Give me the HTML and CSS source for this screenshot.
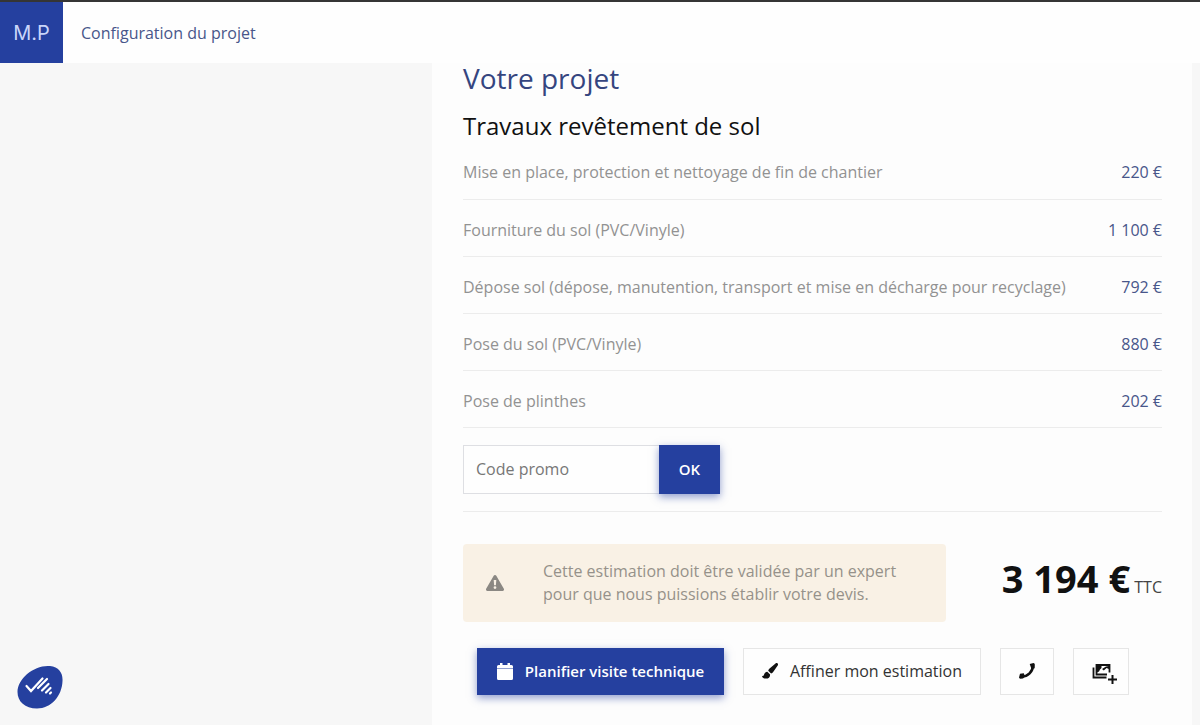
FILE: index.html
```html
<!DOCTYPE html>
<html lang="fr">
<head>
    <meta charset="UTF-8">
    <meta name="viewport" content="width=device-width, initial-scale=1.0">
    <title>Configuration du projet</title>
    <link rel="stylesheet" href="styles.css">
</head>
<body>

<header class="topbar">
    <a class="logo" href="#">M.P</a>
    <span class="topbar-title">Configuration du projet</span>
</header>

<main class="quote">
    <h1>Votre projet</h1>
    <h2>Travaux revêtement de sol</h2>

    <table class="lines">
        <tbody>
            <tr><td>Mise en place, protection et nettoyage de fin de chantier</td><td class="price">220 €</td></tr>
            <tr><td>Fourniture du sol (PVC/Vinyle)</td><td class="price">1 100 €</td></tr>
            <tr><td>Dépose sol (dépose, manutention, transport et mise en décharge pour recyclage)</td><td class="price">792 €</td></tr>
            <tr><td>Pose du sol (PVC/Vinyle)</td><td class="price">880 €</td></tr>
            <tr><td>Pose de plinthes</td><td class="price">202 €</td></tr>
        </tbody>
    </table>

    <form class="promo">
        <input type="text" placeholder="Code promo" aria-label="Code promo">
        <button type="button" class="btn-primary">OK</button>
    </form>

    <div class="summary">
        <div class="notice">
            <div class="notice-icon">
                <svg width="18" height="16" viewBox="0 0 18 16" aria-hidden="true">
                    <path fill="#8b8883" fill-rule="evenodd" d="M7.7.8a1.5 1.5 0 0 1 2.6 0l7.4 12.8A1.5 1.5 0 0 1 16.4 16H1.6A1.5 1.5 0 0 1 .3 13.6zM7.7 5l.4 5.3h1.8l.4-5.3zM9 11.2a1.4 1.4 0 1 0 0 2.8 1.4 1.4 0 0 0 0-2.8z"/>
                </svg>
            </div>
            <p>Cette estimation doit être validée par un expert pour que nous puissions établir votre devis.</p>
        </div>
        <div class="total"><strong>3 194 €</strong> <span>TTC</span></div>
    </div>

    <div class="actions">
        <button type="button" class="btn-primary btn-plan">
            <svg width="16" height="17" viewBox="0 0 16 17" aria-hidden="true">
                <path fill="#fff" d="M3 0h2.5v2h5V0H13v2h1.5A1.5 1.5 0 0 1 16 3.5V5H0V3.5A1.5 1.5 0 0 1 1.5 2H3zM0 5.6h16v9.9a1.5 1.5 0 0 1-1.5 1.5h-13A1.5 1.5 0 0 1 0 15.5z"/>
            </svg>
            Planifier visite technique
        </button>
        <button type="button" class="btn-outline btn-refine">
            <svg width="16" height="16" viewBox="0 0 16 16" aria-hidden="true">
                <path fill="#111" d="M15.6.4c.6.6.5 1.4.1 2.1L11 9.2c-.5.7-1.1 1.1-1.9 1.3L6.2 7.7c.1-.7.5-1.3 1.1-1.9L13.5.5c.6-.5 1.5-.6 2.1-.1zM5.3 8.7l2.8 2.7c.1 2.8-1.5 4.2-4.1 4.2-2.3 0-3.7-.8-4-2.9.9.5 1.5.4 1.9-.7.5-1.9 1.6-3.3 3.4-3.3z"/>
            </svg>
            Affiner mon estimation
        </button>
        <button type="button" class="btn-outline btn-phone" aria-label="Appeler">
            <svg width="16" height="16" viewBox="0 0 16 16" aria-hidden="true">
                <path fill="none" stroke="#111" stroke-width="2.6" d="M13.8 2.5C14 8.6 8.9 13.9 2.3 13.6"/>
                <path fill="#111" d="M10.7 1 14.5 0q1.2 0 1.3 1.5l-.1 3.7-3.2.7zM1 10.8l3.8-.5 1.2 3.3-2 1.9-2.7.2Q.2 15.5 0 14.5z"/>
            </svg>
        </button>
        <button type="button" class="btn-outline btn-photo" aria-label="Ajouter des photos">
            <svg width="34" height="28" viewBox="-8 -6 34 28" fill="none" stroke="#111" aria-hidden="true">
                <path stroke-width="1.8" d="M15 11.5H4.500V2h13v7.500M1.500 4.500v10h13"/>
                <path fill="#111" stroke="none" d="M5 3h4.500v2L8 6.500 7 8.500 5 9.500zM10 6l1.800 1.500L14.500 5 17 6V3l-3 .5z"/>
                <path stroke-width="2" d="M20.500 12v9M16 16.500h9"/>
            </svg>
        </button>
    </div>
</main>

<button type="button" class="consent" aria-label="Préférences de confidentialité">
    <svg width="46" height="44" viewBox="0 0 46 44" aria-hidden="true">
        <path fill="#25409f" d="M33 1c9 1 13 7 12.5 15C45 31 34 43.5 20 43.5 8 43.5.5 36.5.5 27 .5 13 18-.5 33 1z"/>
        <path fill="none" stroke="#fff" stroke-width="2.2" stroke-linecap="round" d="m9.500 21 4.500 5L25.500 13.500M21 23l9-9M25 25.500l6.500-6.500M29 27.500l4.500-4.500M33 28.500l1-1"/>
    </svg>
</button>

</body>
</html>
```
FILE: styles.css
```css
* { box-sizing: border-box; }
body { margin: 0; background-color: #f7f7f7; color: #111; font-family: "Open Sans", "Noto Sans", sans-serif; font-size: 16px; line-height: 24px; }
h1, h2, p { margin: 0; font-weight: 400; }
button, input { font: inherit; border-radius: 0; }
button { display: flex; align-items: center; justify-content: center; cursor: pointer; }
svg { display: block; flex: none; }

.topbar { display: flex; align-items: center; height: 63px; border-top: 2px solid #353535; background-color: #fefefe; }
.logo { display: flex; align-items: center; justify-content: center; width: 63px; height: 100%; background-color: #25409f; color: #c9d5fa; font-family: Inter, sans-serif; font-size: 20px; text-decoration: none; }
.topbar-title { margin-left: 18px; color: #48568a; }

.quote { min-height: calc(100vh - 63px); margin: 0 8px 0 36%; padding: 0 30px 28px 31px; background-color: #fdfdfd; }
h1 { color: #35457f; font-size: 28px; line-height: 30px; }
h2 { margin-top: 17px; font-size: 24px; line-height: 32px; }

.lines { width: 100%; border-collapse: collapse; }
.lines td { height: 57px; padding: 18px 0 14px; border-bottom: 1px solid #ececec; color: #929292; }
.lines .price { color: #48568a; text-align: right; white-space: nowrap; }

.promo { display: flex; padding: 17px 0; border-bottom: 1px solid #ececec; }
.promo input { width: 196px; height: 49px; padding: 0 12px; border: 1px solid #dedfe3; border-right: 0; background-color: #fefefe; }
.promo input::placeholder { color: #777; opacity: 1; }
.promo button { width: 61px; }
.btn-primary { border: 0; background-color: #25409f; color: #fff; font-size: 15px; font-weight: 600; box-shadow: 0 3px 8px rgba(37, 64, 159, 0.5); }

.summary { display: flex; align-items: center; justify-content: space-between; margin-top: 32px; }
.notice { display: flex; align-items: center; width: 483px; min-height: 78px; border-radius: 4px; background-color: #f9f1e5; color: #96918a; line-height: 23px; }
.notice-icon { display: flex; align-items: center; justify-content: center; align-self: stretch; width: 64px; margin-right: 16px; }
.notice p { flex: 1; padding-right: 32px; }
.total { white-space: nowrap; line-height: 48px; }
.total strong { font-size: 38px; }
.total span { color: #444; }

.actions { display: flex; gap: 19px; margin: 26px 0 0 14px; }
.actions button { height: 47px; }
.btn-outline { border: 1px solid #e6e6e6; background-color: #fefefe; color: #333; }
.btn-plan { gap: 12px; width: 247px; }
.btn-refine { gap: 12px; width: 238px; }
.btn-phone { width: 54px; }
.btn-photo { width: 56px; }

.consent { position: fixed; left: 17px; bottom: 16px; padding: 0; border: 0; background: none; }
```
